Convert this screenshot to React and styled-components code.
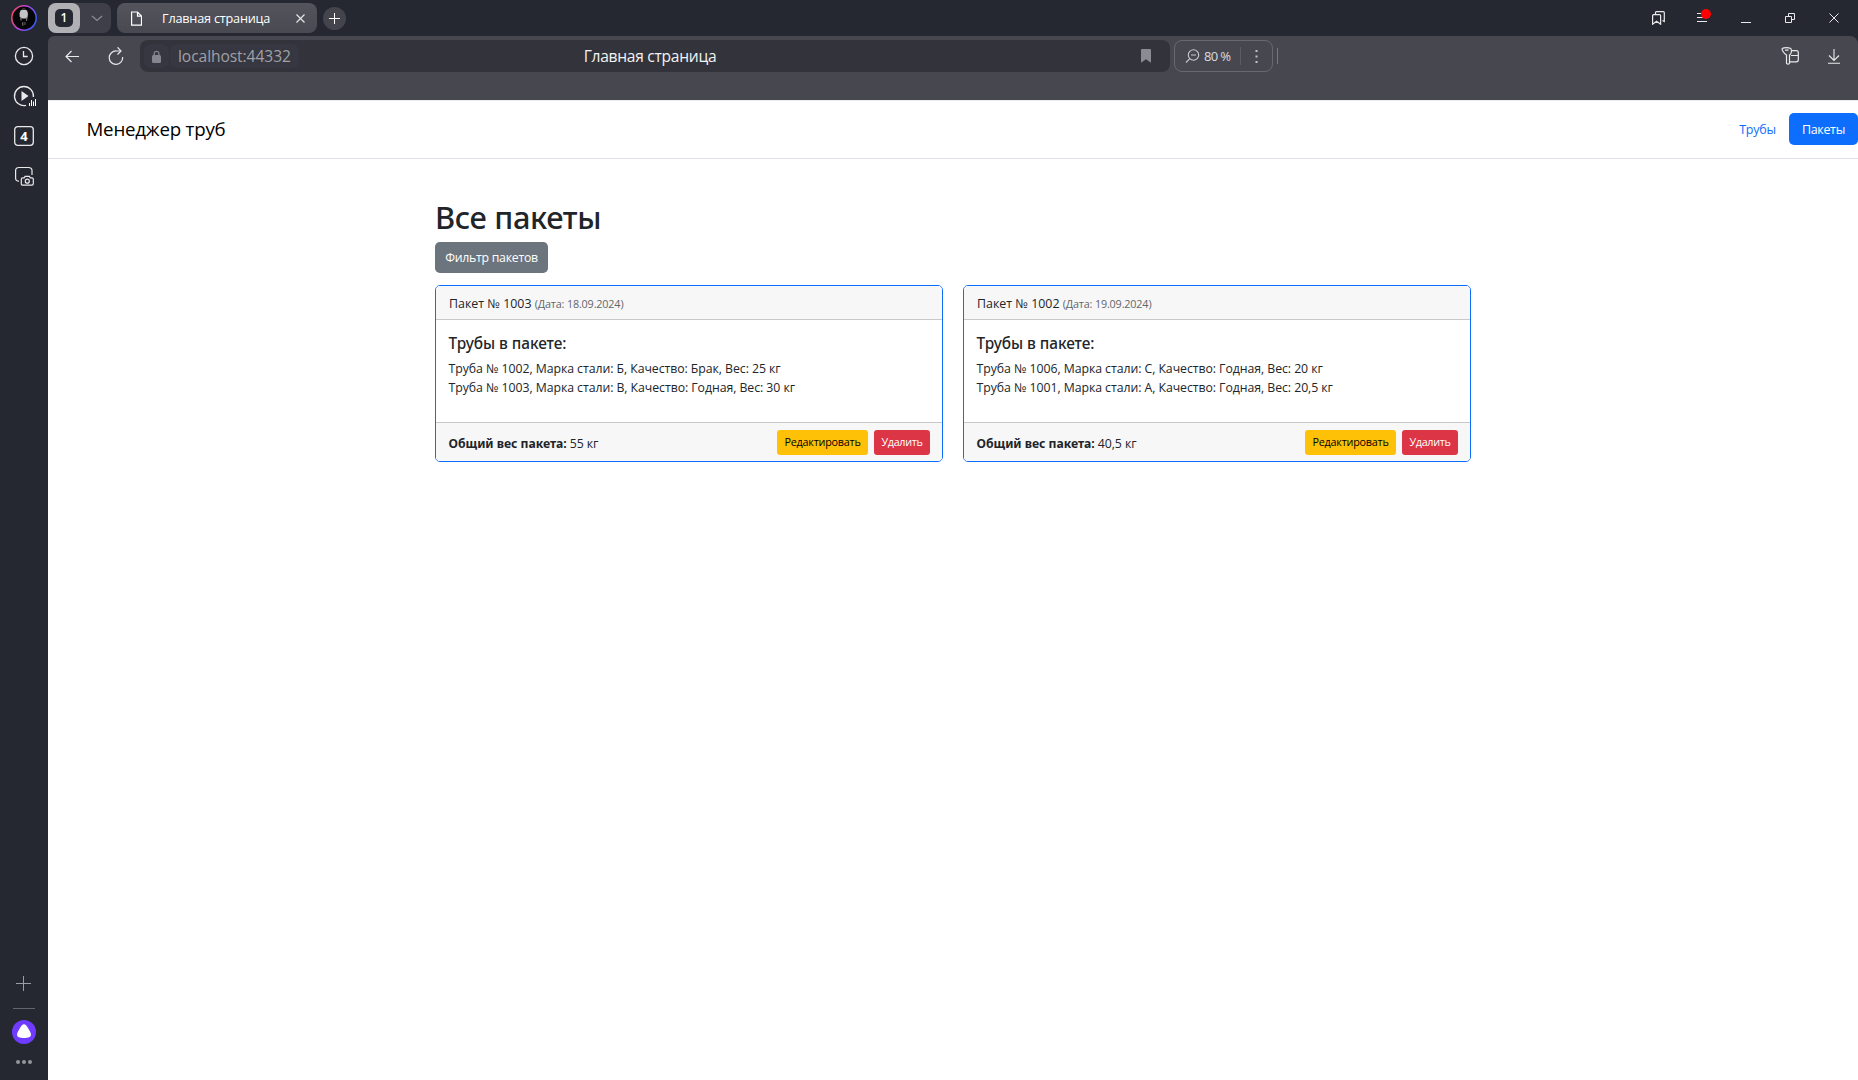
import React from "react";
import styled, { createGlobalStyle, css } from "styled-components";

const GlobalStyle = createGlobalStyle`
  * { box-sizing: border-box; }
  body { margin: 0; background: #fff; font-family: "Open Sans", "Noto Sans", sans-serif; overflow: hidden; }
  h1, h2, ul { margin: 0; padding: 0; }
  svg { display: block; flex: none; }
`;

/* ---------- browser shell ---------- */
const Window = styled.div`
  display: grid;
  grid-template-columns: 48px 1fr;
  width: 1858px;
  height: 1080px;
  background: #252830;
`;

const Rail = styled.nav`
  display: flex;
  flex-direction: column;
  align-items: center;
`;
const RailItem = styled.div`
  display: flex;
  align-items: center;
  justify-content: center;
  width: 48px;
  height: ${(p) => p.$h || 40}px;
`;
const RailSpacer = styled.div`
  flex: 1;
`;
const RailDivider = styled.div`
  width: 22px;
  height: 1px;
  margin: 16px 0 11px;
  background: #62646b;
`;

const Main = styled.div`
  display: flex;
  flex-direction: column;
  min-width: 0;
`;

const TabStrip = styled.div`
  display: flex;
  align-items: center;
  height: 36px;
`;
const TabGroup = styled.div`
  display: flex;
  width: 63px;
  height: 30px;
  border-radius: 8px;
  background: #3e3f48;
`;
const GroupCount = styled.div`
  display: flex;
  align-items: center;
  justify-content: center;
  width: 32px;
  border-radius: 8px;
  background: #b1b1b5;
`;
const GroupBadge = styled.div`
  width: 18px;
  height: 18px;
  border-radius: 5px;
  background: #252830;
  color: #fff;
  font: 600 12px/18px "Open Sans", sans-serif;
  text-align: center;
`;
const GroupToggle = styled.div`
  display: flex;
  flex: 1;
  align-items: center;
  justify-content: center;
  padding-left: 2px;
`;
const Tab = styled.div`
  display: flex;
  align-items: center;
  width: 200px;
  height: 30px;
  margin-left: 6px;
  padding: 0 12.5px 0 14px;
  border-radius: 8px;
  background: linear-gradient(#54545c, #494951);
`;
const TabTitle = styled.span`
  flex: 1;
  padding-left: 20px;
  color: #fff;
  font-size: 12.7px;
  line-height: 30px;
  letter-spacing: -0.21px;
  white-space: nowrap;
`;
const NewTab = styled.div`
  display: flex;
  align-items: center;
  justify-content: center;
  width: 23px;
  height: 23px;
  margin-left: 6px;
  border-radius: 50%;
  background: #44444d;
`;
const Controls = styled.div`
  display: flex;
  margin-left: auto;
  padding-right: 2px;
`;
const Control = styled.div`
  display: flex;
  align-items: center;
  justify-content: center;
  width: 44px;
  height: ${(p) => p.$h || 36}px;
`;

const Toolbar = styled.div`
  display: flex;
  align-items: flex-start;
  height: 64px;
  padding: 4px 0 0 2px;
  border-radius: 6px 8px 0 0;
  background: #474750;
`;
const AddressBar = styled.div`
  display: grid;
  grid-template-columns: 1fr auto 1fr;
  align-items: center;
  width: 1030px;
  height: 32px;
  margin-left: 2px;
  padding: 0 19px 0 4px;
  border-radius: 8px;
  background: #33333c;
`;
const AddressLeft = styled.div`
  display: flex;
  gap: 1px;
  margin-right: 5px;
`;
const Chip = styled.div`
  display: flex;
  align-items: center;
  height: 24px;
  padding: 0 8px;
  border-radius: 7px;
  background: #363740;
  color: #a0a0a6;
  font-size: 15.6px;
  letter-spacing: -0.08px;
`;
const PageTitle = styled.span`
  padding-left: 5px;
  color: #f2f2f3;
  font-size: 15.6px;
  letter-spacing: -0.28px;
  line-height: 32px;
`;
const BookmarkSlot = styled.div`
  display: flex;
  justify-content: flex-end;
`;
const ZoomPill = styled.div`
  display: flex;
  align-items: center;
  width: 99px;
  height: 32px;
  margin-left: 4px;
  padding-left: 10px;
  border: 1px solid #696870;
  border-radius: 8px;
  color: #d4d4d7;
  font-family: "Noto Sans", sans-serif;
  font-size: 13px;
  letter-spacing: -0.7px;
`;
const ZoomValue = styled.span`
  width: 36px;
  padding-left: 4px;
  white-space: nowrap;
`;
const VLine = styled.div`
  width: 1px;
  height: ${(p) => p.$h}px;
  margin: ${(p) => p.$m};
  background: ${(p) => p.$c};
`;

/* ---------- web page ---------- */
const Page = styled.div`
  flex: 1;
  background: #fff;
  border-top: 1px solid #ededee;
  color: #212529;
`;
const SiteHeader = styled.header`
  display: flex;
  align-items: center;
  justify-content: space-between;
  height: 58px;
  padding: 0 0 2px 38.5px;
  border-bottom: 1px solid #dee2e6;
`;
const Brand = styled.span`
  color: #000;
  font-size: 18.7px;
  letter-spacing: -0.2px;
`;
const Pills = styled.nav`
  display: flex;
`;
const Pill = styled.a`
  height: 32px;
  padding: 0 13px;
  border-radius: 5px;
  font-size: 12.5px;
  line-height: 33px;
  color: #0d6efd;
  letter-spacing: -0.2px;
  ${(p) =>
    p.$active &&
    css`
      width: 69px;
      color: #fff;
      background: #0d6efd;
      letter-spacing: -0.35px;
    `}
`;
const Container = styled.main`
  width: 1036px;
  margin: 39px 0 0 387px;
`;
const Heading = styled.h1`
  font: 500 30.8px/38px "Noto Sans", sans-serif;
  letter-spacing: -0.35px;
`;
const Button = styled.button`
  display: block;
  border: 0;
  font-family: "Open Sans", sans-serif;
  white-space: nowrap;
  padding: 0;
  ${(p) =>
    p.$small
      ? css`
          height: 25px;
          border-radius: 3.2px;
          font-size: 10.8px;
          line-height: 24px;
        `
      : css`
          height: 31px;
          border-radius: 4.8px;
          font-size: 12.3px;
          line-height: 32px;
        `}
  width: ${(p) => p.$w}px;
  background: ${(p) => p.$bg};
  color: ${(p) => p.$fg || "#fff"};
  letter-spacing: ${(p) => p.$ls}px;
`;
const FilterButton = styled(Button)`
  margin-top: 6px;
`;
const CardGrid = styled.div`
  display: grid;
  grid-template-columns: 508px 508px;
  gap: 20px;
  margin-top: 12px;
`;
const Card = styled.article`
  display: flex;
  flex-direction: column;
  height: 177px;
  border: 1px solid #0d6efd;
  border-radius: 5px;
  overflow: hidden;
`;
const CardHeader = styled.div`
  height: 34px;
  padding-left: 13px;
  border-bottom: 1px solid #c8c8c8;
  background: #f7f7f7;
  font-size: 12.4px;
  line-height: 36px;
`;
const DateNote = styled.small`
  color: #61666b;
  font-size: 10.8px;
  letter-spacing: -0.16px;
`;
const CardBody = styled.div`
  flex: 1;
  padding: 14px 12.5px 0;
`;
const CardTitle = styled.h2`
  font: 500 15.4px/20px "Noto Sans", sans-serif;
  letter-spacing: -0.04px;
`;
const TubeList = styled.ul`
  list-style: none;
  margin-top: 5px;
  font-size: 12.3px;
  line-height: 19px;
  letter-spacing: -0.06px;
`;
const CardFooter = styled.div`
  display: flex;
  align-items: center;
  gap: 6px;
  height: 39px;
  padding: 0 12px 0 12.5px;
  border-top: 1px solid #c8c8c8;
  background: #f7f7f7;
`;
const Total = styled.span`
  flex: 1;
  padding-top: 2px;
  font-size: 12.3px;
  letter-spacing: -0.08px;
`;
const TotalLabel = styled.strong`
  font-family: "Noto Sans", sans-serif;
  font-size: 12.2px;
  letter-spacing: -0.02px;
`;

const Icon = ({ w, h, color = "#e9e9eb", sw = 1.2, children }) => (
  <svg width={w} height={h} viewBox={`0 0 ${w} ${h}`} fill="none" stroke={color} strokeWidth={sw}>
    {children}
  </svg>
);

const Avatar = () => (
  <svg width="26" height="26" viewBox="0 0 26 26">
    <defs>
      <linearGradient id="ring" x1="0" y1="0.2" x2="1" y2="0.6">
        <stop offset="0" stopColor="#ff4560" />
        <stop offset="0.5" stopColor="#b446e8" />
        <stop offset="1" stopColor="#3a5cff" />
      </linearGradient>
    </defs>
    <circle cx="13" cy="13" r="12.2" fill="#050608" stroke="url(#ring)" strokeWidth="1.5" />
    <path d="M8.500 8.500 9.500 5.500 11.500 4.500h2.500L16 5.500l1 3-.5 4-2 1h-3.500L8.800 12z" fill="#c4c4c8" />
    <path d="M11.500 3h2.500v2h-2.500z" fill="#35323a" />
    <path d="M9 12.500h1.400l.4 3H9.500zM15 12.500h1.600l-.6 3.500h-1zM11 17.500l1.200-.5.3 3.500-1.200.3zM13.500 17l1 .3-.2 2.700h-.8z" fill="#77706f" />
  </svg>
);

const packs = [
  {
    id: 1003,
    date: "18.09.2024",
    total: "55",
    tubes: [
      "Труба № 1002, Марка стали: Б, Качество: Брак, Вес: 25 кг",
      "Труба № 1003, Марка стали: В, Качество: Годная, Вес: 30 кг",
    ],
  },
  {
    id: 1002,
    date: "19.09.2024",
    total: "40,5",
    tubes: [
      "Труба № 1006, Марка стали: С, Качество: Годная, Вес: 20 кг",
      "Труба № 1001, Марка стали: А, Качество: Годная, Вес: 20,5 кг",
    ],
  },
];

const PackCard = ({ pack }) => (
  <Card>
    <CardHeader>
      Пакет № {pack.id} <DateNote>(Дата: {pack.date})</DateNote>
    </CardHeader>
    <CardBody>
      <CardTitle>Трубы в пакете:</CardTitle>
      <TubeList>
        {pack.tubes.map((t) => (
          <li key={t}>{t}</li>
        ))}
      </TubeList>
    </CardBody>
    <CardFooter>
      <Total>
        <TotalLabel>Общий вес пакета:</TotalLabel> {pack.total} кг
      </Total>
      <Button $small $w={91} $bg="#ffc107" $fg="#000" $ls={-0.23}>Редактировать</Button>
      <Button $small $w={56} $bg="#dc3545" $ls={-0.36}>Удалить</Button>
    </CardFooter>
  </Card>
);

const SideRail = () => (
  <Rail>
    <RailItem $h={36}><Avatar /></RailItem>
    <RailItem>
      <Icon w={20} h={20} sw={1.3}>
        <circle cx="10" cy="10" r="8.6" />
        <path d="M9.5 5v5.5h4.2" />
      </Icon>
    </RailItem>
    <RailItem>
      <Icon w={24} h={24} sw={1.3}>
        <path d="M14 21.300A9.500 9.500 0 1 1 21.400 13" />
        <path d="M9.500 7v10l7-5z" fill="#e9e9eb" stroke="none" />
        <path d="M17.500 22v-3M19.500 22v-6M21.500 22v-4.500M23.500 22v-7" stroke="#fff" strokeWidth="1" />
      </Icon>
    </RailItem>
    <RailItem>
      <Icon w={20} h={20} sw={1.3}>
        <rect x="0.7" y="0.7" width="18.6" height="18.6" rx="3" />
        <text x="10" y="15" textAnchor="middle" fill="#fff" stroke="none" fontFamily="Open Sans" fontWeight="700" fontSize="13">4</text>
      </Icon>
    </RailItem>
    <RailItem>
      <Icon w={20} h={20} sw={1.2}>
        <path d="M5 15.200C2.800 15.200 1.600 14 1.600 12V4.600C1.600 2.600 3 1.500 5 1.500H14.500C16.800 1.500 18 2.600 18 4.600V9" />
        <path d="M8.700 11.900h1.500l.9-1.500h4.300l.9 1.500h1.600c.9 0 1.400.5 1.400 1.300v4.500c0 .9-.5 1.400-1.400 1.400H8.700c-.9 0-1.400-.5-1.400-1.400v-4.500c0-.8.500-1.300 1.400-1.300z" />
        <circle cx="13.300" cy="15.200" r="2" />
      </Icon>
    </RailItem>
    <RailSpacer />
    <RailItem $h={16}>
      <Icon w={16} h={16} color="#9a9ca1" sw={1}>
        <path d="M7.500 0v15M0 7.500h15" />
      </Icon>
    </RailItem>
    <RailDivider />
    <RailItem $h={24}>
      <svg width="24" height="24" viewBox="0 0 24 24">
        <circle cx="12" cy="12" r="12" fill="#6e3bff" />
        <path d="M12 4.200c1.400 0 2.400 1.100 4 3.700 2 3.200 3 5.200 3 6.900 0 2.500-2.500 3.200-7 3.200s-7-.7-7-3.200c0-1.700 1-3.700 3-6.900 1.600-2.600 2.600-3.700 4-3.700z" fill="#fff" />
      </svg>
    </RailItem>
    <RailItem $h={36}>
      <svg width="16" height="4" viewBox="0 0 16 4" fill="#94969b">
        <circle cx="2" cy="2" r="2" /><circle cx="8" cy="2" r="2" /><circle cx="14" cy="2" r="2" />
      </svg>
    </RailItem>
  </Rail>
);

export default function App() {
  return (
    <>
      <GlobalStyle />
      <Window>
        <SideRail />
        <Main>
          <TabStrip>
            <TabGroup>
              <GroupCount><GroupBadge>1</GroupBadge></GroupCount>
              <GroupToggle>
                <Icon w={12} h={7} color="#8b8c92" sw={1.3}><path d="M1 1l5 4.500L11 1" /></Icon>
              </GroupToggle>
            </TabGroup>
            <Tab>
              <Icon w={11} h={15} color="#fff" sw={1.2}>
                <path d="M.6 1h5.900l4 4v9.200H.6zM6.500 1v4.200h4" />
              </Icon>
              <TabTitle>Главная страница</TabTitle>
              <Icon w={9} h={9} sw={1.1}><path d="M.5.500l8 8M8.500.500l-8 8" /></Icon>
            </Tab>
            <NewTab><Icon w={11} h={11} color="#fff" sw={1}><path d="M5.500 0v11M0 5.500h11" /></Icon></NewTab>
            <Controls>
              <Control>
                <Icon w={13} h={14}>
                  <path d="M3.500 3V1.600Q3.500.600 4.500.600h6.800q1 0 1 1V10.500l-1.800-1" />
                  <path d="M.6 4.600q0-1 1-1h6q1 0 1 1v8.600L4.600 10.300.6 13.200z" />
                </Icon>
              </Control>
              <Control>
                <Icon w={18} h={18} sw={1}>
                  <path d="M4 4.500h5M4 8.500h6M4 12.500h10" />
                  <circle cx="16" cy="5" r="5" fill="#f00" stroke="none" transform="translate(-3 0)" />
                </Icon>
              </Control>
              <Control><Icon w={10} h={10} sw={1}><path d="M0 9.500h10" /></Icon></Control>
              <Control>
                <Icon w={10} h={10} sw={1}><path d="M.5 3.500h6v6h-6zM3.500 3.500v-3h6v6h-3" /></Icon>
              </Control>
              <Control><Icon w={10} h={10} sw={1}><path d="M.5.500l9 9M9.500.500l-9 9" /></Icon></Control>
            </Controls>
          </TabStrip>

          <Toolbar>
            <Control $h={32}>
              <Icon w={14} h={14} sw={1.2}><path d="M14 7.500H1M6.500 2L1 7.500 6.500 13" /></Icon>
            </Control>
            <Control $h={32}>
              <Icon w={16} h={18} sw={1.2}>
                <path d="M14.600 10A6.700 6.700 0 1 1 8.500 4h3.700" />
                <path d="M9.500.300L13 4 9.500 7.500" />
              </Icon>
            </Control>
            <AddressBar>
              <AddressLeft>
                <Chip>
                  <svg width="9" height="13" viewBox="0 0 9 13">
                    <path d="M2.200 6V3.200a2.400 2.400 0 0 1 4.700 0V6" fill="none" stroke="#85858d" strokeWidth="1.3" />
                    <rect x="0" y="5" width="9" height="8" rx="1.500" fill="#85858d" />
                  </svg>
                </Chip>
                <Chip>localhost:44332</Chip>
              </AddressLeft>
              <PageTitle>Главная страница</PageTitle>
              <BookmarkSlot>
                <svg width="10" height="14" viewBox="0 0 10 14">
                  <path d="M1 0h8q1 0 1 1v12.800L5 10.300 0 13.800V1q0-1 1-1z" fill="#8c8b93" />
                </svg>
              </BookmarkSlot>
            </AddressBar>
            <ZoomPill>
              <Icon w={15} h={14} color="#c9c9cd" sw={1.1}>
                <circle cx="8.500" cy="6" r="5.200" />
                <path d="M4.800 9.700L1 13.500M6 6h5" />
              </Icon>
              <ZoomValue>80 %</ZoomValue>
              <VLine $h={18} $m="0 14.5px 0 3.5px" $c="#5c5b64" />
              <svg width="3" height="13" viewBox="0 0 3 13" fill="#c4c4c8">
                <path d="M.5 0h2v2h-2zM.5 5.500h2v2h-2zM.5 11h2v2h-2z" />
              </svg>
            </ZoomPill>
            <VLine $h={16} $m="8px 0 0 4px" $c="#77767e" />
            <Controls>
              <Control $h={32}>
                <Icon w={18} h={18}>
                  <path d="M1.200 1.500C3 .400 7.500 .400 9.800 1.500 11 3 10.700 6.500 8.500 8v8.300q-1.500 1.600-3 0V8C3 6.500 .600 3 1.200 1.500zM4 3.200h3.500" />
                  <path d="M11 3.600h4.300q2 0 2 2v7.200q0 2-2 2H8.700M10 8.500h7.300" />
                </Icon>
              </Control>
              <Control $h={32}>
                <Icon w={12} h={16} sw={1.1}><path d="M6 1v11.500M1 7.500l5 5 5-5M0 15.200h12" /></Icon>
              </Control>
            </Controls>
          </Toolbar>

          <Page>
            <SiteHeader>
              <Brand>Менеджер труб</Brand>
              <Pills>
                <Pill>Трубы</Pill>
                <Pill $active>Пакеты</Pill>
              </Pills>
            </SiteHeader>
            <Container>
              <Heading>Все пакеты</Heading>
              <FilterButton $w={113} $bg="#6c757d" $ls={-0.26}>Фильтр пакетов</FilterButton>
              <CardGrid>
                {packs.map((p) => (
                  <PackCard key={p.id} pack={p} />
                ))}
              </CardGrid>
            </Container>
          </Page>
        </Main>
      </Window>
    </>
  );
}
